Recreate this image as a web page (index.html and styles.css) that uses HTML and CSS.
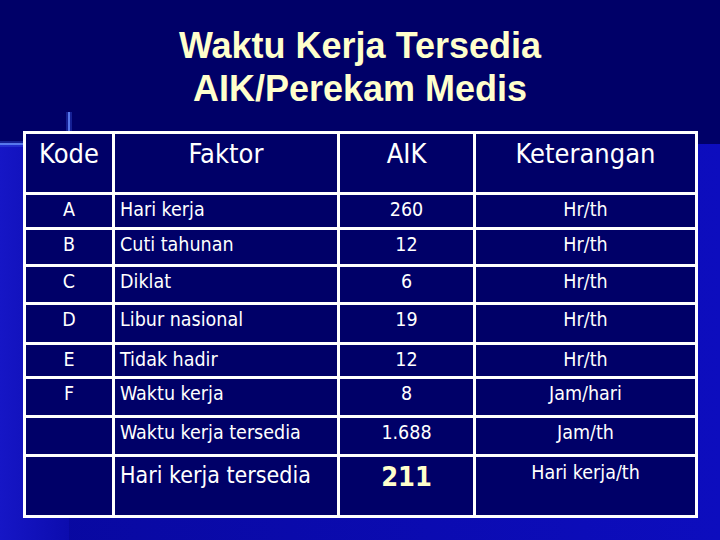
FILE: index.html
```html
<!DOCTYPE html>
<html lang="id">
<head>
<meta charset="utf-8">
<title>Waktu Kerja Tersedia AIK/Perekam Medis</title>
<link rel="stylesheet" href="styles.css">
</head>
<body>
<div class="slide">
  <h1 class="title">Waktu Kerja Tersedia<br>AIK/Perekam Medis</h1>
  <div class="grid" role="table">
    <div class="cell head c">Kode</div>
    <div class="cell head c">Faktor</div>
    <div class="cell head c">AIK</div>
    <div class="cell head c">Keterangan</div>

    <div class="cell c">A</div>
    <div class="cell l">Hari kerja</div>
    <div class="cell c">260</div>
    <div class="cell c">Hr/th</div>

    <div class="cell c">B</div>
    <div class="cell l">Cuti tahunan</div>
    <div class="cell c">12</div>
    <div class="cell c">Hr/th</div>

    <div class="cell c">C</div>
    <div class="cell l">Diklat</div>
    <div class="cell c">6</div>
    <div class="cell c">Hr/th</div>

    <div class="cell c">D</div>
    <div class="cell l">Libur nasional</div>
    <div class="cell c">19</div>
    <div class="cell c">Hr/th</div>

    <div class="cell c">E</div>
    <div class="cell l">Tidak hadir</div>
    <div class="cell c">12</div>
    <div class="cell c">Hr/th</div>

    <div class="cell c">F</div>
    <div class="cell l">Waktu kerja</div>
    <div class="cell c">8</div>
    <div class="cell c">Jam/hari</div>

    <div class="cell c"></div>
    <div class="cell l">Waktu kerja tersedia</div>
    <div class="cell c">1.688</div>
    <div class="cell c">Jam/th</div>

    <div class="cell last c"></div>
    <div class="cell last l big">Hari kerja tersedia</div>
    <div class="cell last c total">211</div>
    <div class="cell last c">Hari kerja/th</div>
  </div>
</div>
</body>
</html>
```

FILE: styles.css
```css
html, body {
  margin: 0;
  padding: 0;
}

body {
  width: 720px;
  height: 540px;
  overflow: hidden;
  background:
    linear-gradient(rgba(90, 124, 240, 0.95), rgba(90, 124, 240, 0.95)) 68px 112px / 2px 32px no-repeat,
    linear-gradient(rgba(60, 90, 230, 0.35), rgba(60, 90, 230, 0.35)) 66px 112px / 6px 32px no-repeat,
    linear-gradient(rgba(90, 124, 240, 0.95), rgba(90, 124, 240, 0.95)) 0 143px / 69px 2px no-repeat,
    linear-gradient(rgba(60, 90, 230, 0.35), rgba(60, 90, 230, 0.35)) 0 141px / 69px 6px no-repeat,
    linear-gradient(#000068, #000068) 0 0 / 100% 144px no-repeat,
    linear-gradient(to right, #1616c6, #0c0cae) 0 144px / 69px 396px no-repeat,
    linear-gradient(to right, #08089e, #0d0dbe) #0b0bb0;
}

.slide {
  padding-top: 24px;
}

.title {
  margin: 0;
  font-family: "Liberation Sans", Arial, sans-serif;
  font-weight: bold;
  font-size: 36px;
  line-height: 43px;
  color: #ffffcc;
  text-align: center;
}

.grid {
  margin: 21px 0 0 23px;
  width: 675px;
  box-sizing: border-box;
  display: grid;
  grid-template-columns: 89px 225px 136px 222px;
  grid-template-rows: 61px 35px 37px 38px 40px 34px 39px 39px 61px;
  border-top: 3px solid #ffffff;
  border-left: 3px solid #ffffff;
  background: #000068;
  font-family: "DejaVu Sans Condensed", "DejaVu Sans", sans-serif;
  font-stretch: condensed;
  color: #ffffff;
}

.cell {
  box-sizing: border-box;
  border-right: 3px solid #ffffff;
  border-bottom: 3px solid #ffffff;
  font-size: 19.5px;
  line-height: normal;
  padding-top: 3px;
  white-space: nowrap;
}

.c {
  text-align: center;
}

.l {
  text-align: left;
  padding-left: 5px;
}

.head {
  font-size: 27px;
  padding-top: 4px;
}

.last {
  padding-top: 4px;
}

.big {
  font-size: 23px;
  padding-top: 5px;
}

.total {
  font-size: 27px;
  font-weight: bold;
  color: #ffffcc;
  padding-top: 4px;
}
```
